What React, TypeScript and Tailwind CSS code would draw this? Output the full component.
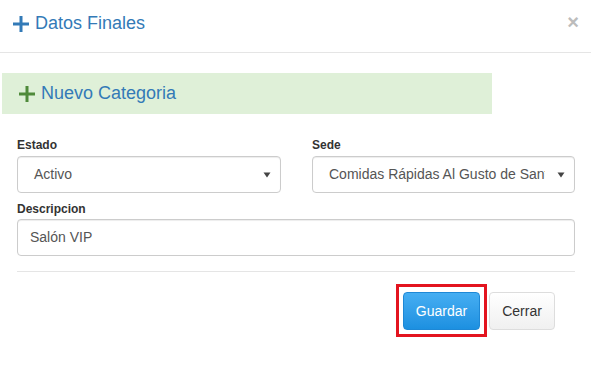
import React from "react";

const Caret = () => (
  <svg width="8" height="6" viewBox="0 0 8 6" className="shrink-0">
    <path d="M0.5 0.5 L7.5 0.5 L4 5.5 Z" fill="#444" />
  </svg>
);

const Plus = ({ color, size }: { color: string; size: number }) => (
  <svg width={size} height={size} viewBox="0 0 16 16" className="shrink-0">
    <rect x="6.5" y="0" width="3" height="16" fill={color} />
    <rect x="0" y="6.5" width="16" height="3" fill={color} />
  </svg>
);

export default function App() {
  return (
    <div
      className="w-[591px] h-[380px] bg-white overflow-hidden text-[14px] text-[#333]"
      style={{ fontFamily: '"Liberation Sans", Arial, sans-serif' }}
    >
      <div className="h-[53px] border-b border-[#e5e5e5] flex items-center justify-between pl-[13px] pr-[12px]">
        <div className="flex items-center gap-[6px] text-[18px] text-[#337ab7] -mt-[5px]">
          <Plus color="#337ab7" size={16} />
          <span>Datos Finales</span>
        </div>
        <span className="text-[#bcbcbc] text-[20px] font-bold leading-none -mt-[9px]">×</span>
      </div>

      <div className="pt-[20px] pl-[2px]">
        <div className="w-[490px] h-[41px] bg-[#dff0d8] flex items-center pl-[17px] gap-[6px] text-[18px] text-[#337ab7]">
          <Plus color="#4f8a3a" size={16} />
          <span>Nuevo Categoria</span>
        </div>
      </div>

      <div className="pl-[17px] pr-[16px] pt-[23px]">
        <div className="grid grid-cols-[264px_263px] gap-x-[31px]">
          <div>
            <div className="text-[12px] font-bold leading-[17px] mb-[2px]">Estado</div>
            <div className="h-[37px] border border-[#ccc] rounded-[4px] flex items-center justify-between pl-[16px] pr-[9px] text-[#555] shadow-[inset_0_1px_1px_rgba(0,0,0,0.075)]">
              <span>Activo</span>
              <Caret />
            </div>
          </div>
          <div>
            <div className="text-[12px] font-bold leading-[17px] mb-[2px]">Sede</div>
            <div className="h-[37px] border border-[#ccc] rounded-[4px] flex items-center justify-between pl-[16px] pr-[9px] text-[#555] shadow-[inset_0_1px_1px_rgba(0,0,0,0.075)]">
              <span className="whitespace-nowrap overflow-hidden w-[216px]">Comidas Rápidas Al Gusto de Santa</span>
              <Caret />
            </div>
          </div>
        </div>

        <div className="mt-[8px]">
          <div className="text-[12px] font-bold leading-[17px] mb-[1px]">Descripcion</div>
          <div className="h-[37px] border border-[#ccc] rounded-[4px] flex items-center pl-[12px] text-[#555] shadow-[inset_0_1px_1px_rgba(0,0,0,0.075)]">
            Salón VIP
          </div>
        </div>

        <div className="mt-[15px] h-px bg-[#e5e5e5]" />

        <div className="flex justify-end items-center pr-[20px] mt-[12px] gap-[2px]">
          <div className="border-[3px] border-[#e3141f] pt-[5px] pb-[4px] px-[4px]">
            <div className="w-[77px] h-[38px] rounded-[4px] border border-[#1e88d6] bg-gradient-to-b from-[#45aef2] to-[#1c90e0] text-white flex items-center justify-center">
              Guardar
            </div>
          </div>
          <div className="w-[66px] h-[38px] rounded-[4px] border border-[#ddd] bg-gradient-to-b from-white to-[#f0f0f0] text-[#333] flex items-center justify-center mt-[1px]">
            Cerrar
          </div>
        </div>
      </div>
    </div>
  );
}
